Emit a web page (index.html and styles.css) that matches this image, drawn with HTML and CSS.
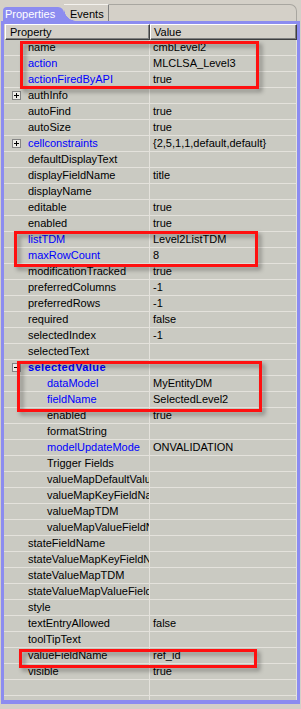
FILE: index.html
```html
<!DOCTYPE html>
<html lang="en">
<head>
    <meta charset="UTF-8">
    <title>Properties</title>
    <link rel="stylesheet" href="styles.css">
</head>
<body>
    <div class="pane">
        <div class="tab-strip">
            <div class="tab tab-active">Properties</div>
            <div class="tab">Events</div>
            <div class="tab-fill"></div>
        </div>
        <div class="panel">
            <div class="grid-header">
                <div class="head head-prop">Property</div>
                <div class="head head-val">Value</div>
            </div>
            <div class="rows">
                <div class="row"><div class="prop">name</div><div class="val">cmbLevel2</div></div>
                <div class="row"><div class="prop blue">action</div><div class="val">MLCLSA_Level3</div></div>
                <div class="row"><div class="prop blue">actionFiredByAPI</div><div class="val">true</div></div>
                <div class="row"><div class="prop"><span class="exp plus"></span>authInfo</div><div class="val"></div></div>
                <div class="row"><div class="prop">autoFind</div><div class="val">true</div></div>
                <div class="row"><div class="prop">autoSize</div><div class="val">true</div></div>
                <div class="row"><div class="prop blue"><span class="exp plus"></span>cellconstraints</div><div class="val">{2,5,1,1,default,default}</div></div>
                <div class="row"><div class="prop">defaultDisplayText</div><div class="val"></div></div>
                <div class="row"><div class="prop">displayFieldName</div><div class="val">title</div></div>
                <div class="row"><div class="prop">displayName</div><div class="val"></div></div>
                <div class="row"><div class="prop">editable</div><div class="val">true</div></div>
                <div class="row"><div class="prop">enabled</div><div class="val">true</div></div>
                <div class="row"><div class="prop blue">listTDM</div><div class="val">Level2ListTDM</div></div>
                <div class="row"><div class="prop blue">maxRowCount</div><div class="val">8</div></div>
                <div class="row"><div class="prop">modificationTracked</div><div class="val">true</div></div>
                <div class="row"><div class="prop">preferredColumns</div><div class="val">-1</div></div>
                <div class="row"><div class="prop">preferredRows</div><div class="val">-1</div></div>
                <div class="row"><div class="prop">required</div><div class="val">false</div></div>
                <div class="row"><div class="prop">selectedIndex</div><div class="val">-1</div></div>
                <div class="row"><div class="prop">selectedText</div><div class="val"></div></div>
                <div class="row"><div class="prop blue bold"><span class="exp minus"></span>selectedValue</div><div class="val"></div></div>
                <div class="row"><div class="prop blue sub">dataModel</div><div class="val">MyEntityDM</div></div>
                <div class="row"><div class="prop blue sub">fieldName</div><div class="val">SelectedLevel2</div></div>
                <div class="row"><div class="prop sub">enabled</div><div class="val">true</div></div>
                <div class="row"><div class="prop sub">formatString</div><div class="val"></div></div>
                <div class="row"><div class="prop blue sub">modelUpdateMode</div><div class="val">ONVALIDATION</div></div>
                <div class="row"><div class="prop sub">Trigger Fields</div><div class="val"></div></div>
                <div class="row"><div class="prop sub">valueMapDefaultValue</div><div class="val"></div></div>
                <div class="row"><div class="prop sub">valueMapKeyFieldName</div><div class="val"></div></div>
                <div class="row"><div class="prop sub">valueMapTDM</div><div class="val"></div></div>
                <div class="row"><div class="prop sub">valueMapValueFieldName</div><div class="val"></div></div>
                <div class="row"><div class="prop">stateFieldName</div><div class="val"></div></div>
                <div class="row"><div class="prop">stateValueMapKeyFieldName</div><div class="val"></div></div>
                <div class="row"><div class="prop">stateValueMapTDM</div><div class="val"></div></div>
                <div class="row"><div class="prop">stateValueMapValueFieldName</div><div class="val"></div></div>
                <div class="row"><div class="prop">style</div><div class="val"></div></div>
                <div class="row"><div class="prop">textEntryAllowed</div><div class="val">false</div></div>
                <div class="row"><div class="prop">toolTipText</div><div class="val"></div></div>
                <div class="row"><div class="prop">valueFieldName</div><div class="val">ref_id</div></div>
                <div class="row"><div class="prop">visible</div><div class="val">true</div></div>
                <div class="row"><div class="prop"></div><div class="val"></div></div>
                <div class="row"><div class="prop"></div><div class="val"></div></div>
            </div>
        </div>
    </div>

    <!-- red annotation frames drawn over the grid -->
    <div class="mark mark-1"></div>
    <div class="mark mark-2"></div>
    <div class="mark mark-3"></div>
    <div class="mark mark-4"></div>
</body>
</html>
```

FILE: styles.css
```css
body {
    margin: 0;
    background-color: #d4d0c8;
    font-family: "Liberation Sans", Arial, sans-serif;
    font-size: 11px;
    color: #000;
    overflow: hidden;
}
.pane {
    width: 300px;
    height: 709px;
}
.tab-strip {
    display: flex;
    align-items: flex-end;
    height: 21px;
    padding-left: 3px;
}
.tab {
    box-sizing: border-box;
    height: 17px;
    padding: 2px 4px 0 6px;
    line-height: 14px;
    border-top: 1px solid #f4f2ee;
    border-right: 1px solid #808080;
}
.tab-active {
    position: relative;
    height: 14px;
    width: 61px;
    padding: 0 0 0 2px;
    border: none;
    background-color: #8c8cf0;
    color: #fff;
    line-height: 14px;
    border-top-left-radius: 4px;
    border-top-right-radius: 6px;
    z-index: 1;
}
.tab-active::after {
    content: "";
    position: absolute;
    left: 100%;
    bottom: 0;
    width: 12px;
    height: 12px;
    background: radial-gradient(circle at 100% 0, transparent 11.5px, #8c8cf0 12px);
}
.tab-fill {
    flex: 1;
    box-sizing: border-box;
    height: 17px;
    margin-right: 3px;
    border-top: 1px solid #a8a6a0;
    border-right: 1px solid #a8a6a0;
    border-top-right-radius: 7px;
}
.panel {
    margin-left: 1px;
    width: 293px;
    border: 3px solid #8c8cf0;
    border-bottom-width: 4px;
}
.grid-header {
    display: flex;
    height: 16px;
}
.head {
    box-sizing: border-box;
    height: 16px;
    padding-left: 4px;
    line-height: 14px;
    border-top: 1px solid #fff;
    border-left: 1px solid #fff;
    border-bottom: 1px solid #404040;
    border-right: 1px solid #404040;
    box-shadow: inset -1px -1px 0 #808080;
    background-color: #d4d0c8;
}
.head-prop {
    margin-left: 1px;
    width: 145px;
}
.head-val {
    width: 147px;
    padding-left: 3px;
}
.rows {
    height: 660px;
    overflow: hidden;
    background-color: #cacac2;
}
.row {
    display: flex;
    box-sizing: border-box;
    height: 16px;
    border-bottom: 1px solid #e4e2dc;
    line-height: 15px;
    white-space: nowrap;
}
.prop {
    position: relative;
    box-sizing: border-box;
    width: 146px;
    padding-left: 24px;
    overflow: hidden;
    border-right: 1px solid #e4e2dc;
}
.prop.sub {
    padding-left: 43px;
}
.val {
    box-sizing: border-box;
    width: 147px;
    padding-left: 3px;
    overflow: hidden;
    border-right: 1px solid #e4e2dc;
}
.blue {
    color: #0000ff;
}
.bold {
    font-weight: bold;
    letter-spacing: 0.4px;
}
.exp {
    position: absolute;
    left: 8px;
    top: 3px;
    box-sizing: border-box;
    width: 9px;
    height: 9px;
    border: 1px solid #848484;
    background-color: #ecebe6;
}
.exp::before,
.exp::after {
    content: "";
    position: absolute;
    background-color: #000;
}
.exp::before {
    left: 1px;
    top: 3px;
    width: 5px;
    height: 1px;
}
.plus::after {
    left: 3px;
    top: 1px;
    width: 1px;
    height: 5px;
}
.minus::after {
    display: none;
}
.mark {
    position: absolute;
    box-sizing: border-box;
    border: 3px solid #ff1010;
    filter: drop-shadow(3px 3px 2px rgba(0, 0, 0, 0.35));
}
.mark-1 {
    left: 20px;
    top: 41px;
    width: 239px;
    height: 48px;
}
.mark-2 {
    left: 14px;
    top: 231px;
    width: 244px;
    height: 36px;
}
.mark-3 {
    left: 17px;
    top: 361px;
    width: 245px;
    height: 51px;
}
.mark-4 {
    left: 19px;
    top: 649px;
    width: 238px;
    height: 19px;
}
```
